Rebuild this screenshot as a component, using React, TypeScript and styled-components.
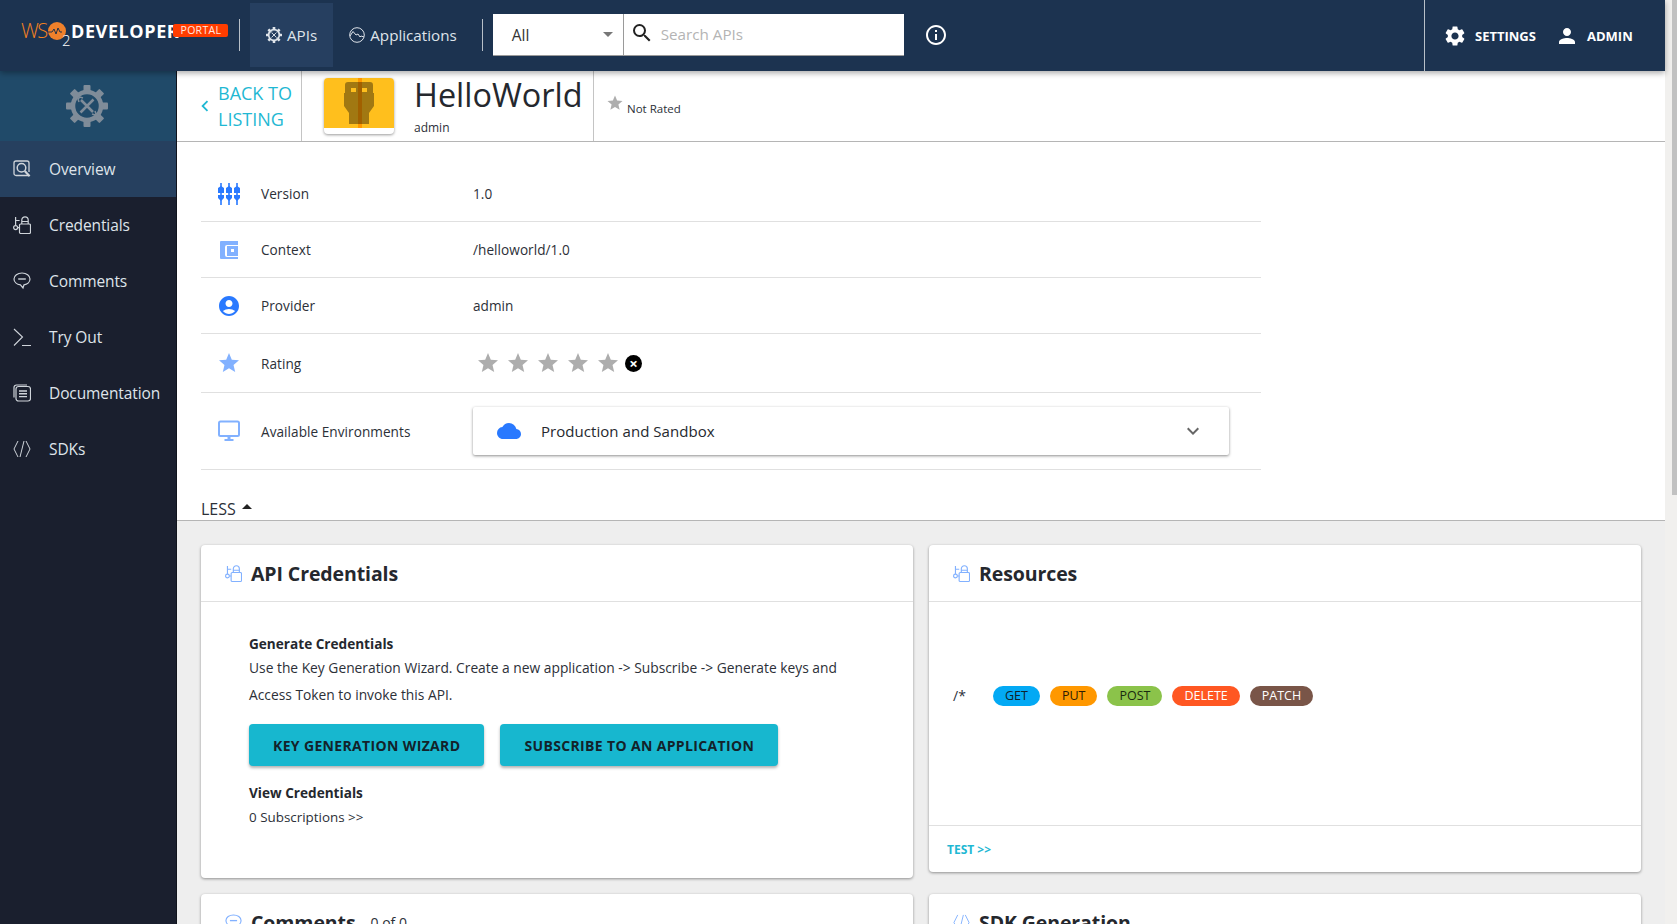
import styled, { createGlobalStyle } from "styled-components";
import {
	MdAccountCircle,
	MdChevronLeft,
	MdCloud,
	MdExpandMore,
	MdInfoOutline,
	MdPerson,
	MdSearch,
	MdSettings,
	MdStar,
} from "react-icons/md";

const GlobalStyle = createGlobalStyle`
	html, body {
		margin: 0;
		height: 100%;
		overflow: hidden;
	}
	body {
		font-family: "Open Sans", "Liberation Sans", sans-serif;
		color: #2c3038;
		background: #eeeeee;
	}
	* {
		box-sizing: border-box;
	}
`;

const Page = styled.div`
	display: flex;
	height: 924px;
	overflow: hidden;
`;

const Main = styled.div`
	flex: 1;
	min-width: 0;
	display: flex;
	flex-direction: column;
`;

const ScrollTrack = styled.div`
	width: 12px;
	flex: none;
	display: flex;
	justify-content: flex-end;
	align-items: flex-start;
	background: #f1f0ee;
`;

const ScrollThumb = styled.div`
	width: 5px;
	height: 495px;
	background: #c1c1c1;
`;

/* top bar */
const Header = styled.header`
	height: 71px;
	flex: none;
	display: flex;
	align-items: center;
	padding-left: 21px;
	background: #1c3350;
	color: #fff;
	box-shadow: 0 2px 6px rgb(0 0 0 / 0.35);
	position: relative;
	z-index: 2;
`;

const Logo = styled.div`
	width: 218px;
	height: 71px;
	display: flex;
	align-items: center;
	flex: none;
	padding-bottom: 10px;
`;

const LogoWs = styled.span`
	font-size: 20px;
	font-weight: 300;
	letter-spacing: -1.6px;
	color: #f58220;
	width: 27px;
`;

const LogoTwo = styled.span`
	font-size: 15px;
	font-weight: 300;
	width: 6px;
	margin-left: -4px;
	margin-top: 18px;
`;

const LogoName = styled.span`
	font-size: 18px;
	font-weight: 700;
	letter-spacing: 0.6px;
	margin-left: 3px;
`;

const LogoBadge = styled.span`
	width: 55px;
	height: 13px;
	margin-left: -6px;
	border-radius: 2px;
	background: #ff3d00;
	color: #ffe9e0;
	font-size: 10.5px;
	line-height: 13px;
	text-align: center;
	letter-spacing: 0.3px;
`;

const HeaderRule = styled.div`
	width: 1px;
	height: 32px;
	flex: none;
	margin-bottom: 2px;
	background: #b8c0c8;
`;

const TopTab = styled.a<{ $active?: boolean }>`
	height: 64px;
	margin-bottom: 2px;
	display: flex;
	align-items: center;
	gap: 5px;
	padding: 0 16px;
	font-size: 15.2px;
	color: #dfe4ea;
	background: ${(p) => (p.$active ? "#263f60" : "transparent")};
`;

const TopTabs = styled.nav`
	display: flex;
	margin: 0 9px 0 10px;
`;

const SearchBox = styled.div`
	display: flex;
	height: 42px;
	width: 411px;
	margin: 0 20px 2px 10px;
	background: #fff;
	border-bottom: 1px solid #9a9a9a;
	color: #333;
`;

const CategorySelect = styled.div`
	width: 131px;
	flex: none;
	display: flex;
	align-items: center;
	justify-content: space-between;
	padding: 1px 10px 0 19px;
	font-size: 15.5px;
	border-right: 1px solid #9a9a9a;

	&::after {
		content: "";
		border-left: 5px solid transparent;
		border-right: 5px solid transparent;
		border-top: 5px solid #777;
	}
`;

const SearchField = styled.div`
	flex: 1;
	display: flex;
	align-items: center;
	gap: 7px;
	padding: 0 0 0 6px;
	font-size: 15.2px;
	color: #b4b4b4;

	svg {
		color: #222;
		margin-bottom: 2px;
	}
`;

const HeaderRight = styled.div`
	margin-left: auto;
	width: 241px;
	height: 71px;
	flex: none;
	display: flex;
	align-items: center;
	padding-left: 18px;
	border-left: 1px solid #b8c0c8;
`;

const HeaderAction = styled.span<{ $gap: number; $width: number }>`
	width: ${(p) => p.$width}px;
	display: flex;
	align-items: center;
	gap: ${(p) => p.$gap}px;
	font-size: 13px;
	font-weight: 700;
`;

const InfoButton = styled.span`
	display: flex;
	margin-bottom: 2px;
`;

/* below the top bar */
const Body = styled.div`
	flex: 1;
	min-height: 0;
	display: flex;
`;

const Sidebar = styled.aside`
	width: 177px;
	flex: none;
	background: #1a1f2e;
	border-right: 1px solid #10131c;
`;

const SidebarHead = styled.div`
	height: 70px;
	display: flex;
	align-items: center;
	justify-content: center;
	padding-right: 2px;
	background: #204a69;
	color: #7f8c99;
`;

const SideItem = styled.a<{ $active?: boolean }>`
	height: 56px;
	display: flex;
	align-items: center;
	gap: 18px;
	padding-left: 13px;
	font-size: 15.5px;
	letter-spacing: -0.1px;
	color: #dfe4ea;
	background: ${(p) => (p.$active ? "#26405f" : "transparent")};

	svg {
		flex: none;
		color: #cfd4da;
	}
`;

const Content = styled.div`
	flex: 1;
	min-width: 0;
	overflow: hidden;
`;

const TitleBar = styled.div`
	height: 71px;
	display: flex;
	background: #fff;
	border-bottom: 1px solid #b5b5b5;
`;

const BackLink = styled.a`
	width: 125px;
	flex: none;
	display: flex;
	align-items: center;
	padding-left: 20px;
	gap: 2px;
	border-right: 1px solid #c4c4c4;
	color: #1fb8d3;
	font-size: 18px;
	line-height: 26px;

	svg {
		margin-left: -3px;
		flex: none;
	}
`;

const ApiIdentity = styled.div`
	width: 292px;
	flex: none;
	display: flex;
	padding: 7px 0 0 22px;
	border-right: 1px solid #c4c4c4;
`;

const Thumb = styled.div`
	width: 70px;
	height: 56px;
	flex: none;
	border-radius: 4px;
	overflow: hidden;
	background: #fff;
	box-shadow: 0 1px 3px rgb(0 0 0 / 0.4);
`;

const ApiText = styled.div`
	margin-left: 20px;
`;

const ApiName = styled.h1`
	margin: -6px 0 0;
	font-size: 32.4px;
	font-weight: 400;
	line-height: 44px;
	color: #25282e;
`;

const ApiOwner = styled.div`
	font-size: 12px;
	line-height: 17px;
	margin-top: 3px;
`;

const RatingSummary = styled.div`
	display: flex;
	align-items: flex-start;
	gap: 3px;
	padding: 23px 0 0 12px;
	font-size: 11.5px;
	line-height: 22px;

	svg {
		color: #adadad;
		flex: none;
	}

	span {
		margin-top: 4px;
	}
`;

const Details = styled.section`
	height: 379px;
	padding: 24px 0 0 24px;
	background: #fff;
	border-bottom: 1px solid #b5b5b5;
`;

const DetailTable = styled.div`
	width: 1060px;
`;

const DetailRow = styled.div<{ $height: number }>`
	height: ${(p) => p.$height}px;
	display: grid;
	grid-template-columns: 60px 212px 1fr;
	align-items: center;
	border-bottom: 1px solid #e0e0e0;
	font-size: 13.6px;
	letter-spacing: 0.05px;
`;

const DetailIcon = styled.div<{ $color: string }>`
	width: 56px;
	display: flex;
	justify-content: center;
	color: ${(p) => p.$color};
`;

const Stars = styled.div`
	display: flex;
	align-items: center;
	padding-left: 3px;
	color: #adadad;

	svg {
		margin-right: 6px;
	}
`;

const ClearRating = styled.span`
	width: 17px;
	height: 17px;
	margin-left: -1px;
	border-radius: 50%;
	background: #000;
	color: #fff;
	font-size: 15px;
	font-weight: 700;
	line-height: 16px;
	text-align: center;
`;

const Expansion = styled.div`
	width: 756px;
	height: 48px;
	display: flex;
	align-items: center;
	padding: 0 24px 0 24px;
	border-radius: 2px;
	background: #fff;
	box-shadow: 0 1px 3px rgb(0 0 0 / 0.45);
	font-size: 15px;
	color: #25282e;

	svg:first-child {
		color: #2979ff;
	}

	svg:last-child {
		margin-left: auto;
		color: #666;
	}
`;

const ExpansionLabel = styled.span`
	margin-left: 20px;
`;

const LessToggle = styled.div`
	margin-top: 28px;
	display: flex;
	align-items: center;
	gap: 6px;
	font-size: 16px;
	line-height: 22px;

	&::after {
		content: "";
		margin-bottom: 6px;
		border-left: 5px solid transparent;
		border-right: 5px solid transparent;
		border-bottom: 5px solid #222;
	}
`;

/* cards */
const CardGrid = styled.div`
	display: grid;
	grid-template-columns: 712px 712px;
	gap: 16px;
	align-items: start;
	padding: 24px 24px 24px 24px;
`;

const Card = styled.article`
	border-radius: 4px;
	background: #fff;
	box-shadow: 0 1px 3px rgb(0 0 0 / 0.4);
`;

const CardHead = styled.div`
	height: 57px;
	display: flex;
	align-items: center;
	gap: 9px;
	padding: 0 0 0 24px;
	border-bottom: 1px solid #e0e0e0;

	svg {
		color: #82b1ff;
		flex: none;
	}
`;

const CardTitle = styled.h2`
	margin: 0;
	font-size: 19.5px;
	font-weight: 700;
	letter-spacing: -0.1px;
	color: #25282e;
`;

const CardCount = styled.span`
	font-size: 14px;
	margin-left: 6px;
`;

const CredentialsBody = styled.div`
	padding: 32px 48px 49px;
	font-size: 13.8px;
`;

const BlockTitle = styled.h3`
	margin: 0;
	font-size: 13.6px;
	font-weight: 700;
	line-height: 20px;
	color: #25282e;
`;

const Paragraph = styled.p`
	margin: 0;
	line-height: 27px;
`;

const ButtonRow = styled.div`
	display: flex;
	gap: 16px;
	margin: 16px 0 17px;
`;

const ActionButton = styled.button`
	height: 42px;
	padding: 0 24px;
	border: 0;
	border-radius: 4px;
	background: #17b7cf;
	box-shadow: 0 2px 3px rgb(0 0 0 / 0.3);
	color: #13222a;
	font-family: inherit;
	font-size: 14px;
	font-weight: 700;
	letter-spacing: 0.35px;
`;

const SubscriptionLink = styled.div`
	font-size: 13.4px;
	line-height: 24px;
	margin-top: 2px;
`;

const ResourcesBody = styled.div`
	height: 223px;
	display: flex;
	gap: 10px;
	align-items: flex-start;
	padding: 84px 0 0 24px;
	font-size: 14px;
`;

const ResourcePath = styled.span`
	width: 30px;
	line-height: 20px;
`;

const MethodChip = styled.span<{ $bg: string; $fg: string }>`
	height: 20px;
	padding: 0 12px;
	border-radius: 10px;
	background: ${(p) => p.$bg};
	color: ${(p) => p.$fg};
	font-size: 12.5px;
	line-height: 20px;
`;

const CardFooter = styled.div`
	height: 47px;
	display: flex;
	align-items: center;
	padding: 0 0 0 18px;
	border-top: 1px solid #e0e0e0;
	color: #1fb8d3;
	font-size: 12px;
	font-weight: 700;
`;

type IconProps = { size?: number };

const OverviewIcon = ({ size = 18 }: IconProps) => (
	<svg width={size} height={size} viewBox="0 0 18 18" fill="none" stroke="currentColor">
		<path d="M15 15.5H3a2 2 0 0 1-2-2V3a2 2 0 0 1 2-2h11a2 2 0 0 1 2 2v9" strokeWidth="1.3" />
		<circle cx="8.5" cy="7.8" r="4.3" strokeWidth="1.5" />
		<path d="M11.8 11l4.8 5.2" strokeWidth="2.2" />
	</svg>
);

const CredentialsIcon = ({ size = 18 }: IconProps) => (
	<svg width={size} height={size} viewBox="0 0 18 18" fill="none" stroke="currentColor" strokeWidth="1.2">
		<rect x="6.5" y="8" width="11" height="9.5" rx="1.2" />
		<path d="M8.8 8V4a3.2 3.2 0 0 1 6.4 0v4M8.8 5.5h6.4" />
		<circle cx="2.6" cy="11.6" r="2" />
		<path d="M2.6 9.5V1M2.6 4.5h4M4.6 11.6h2" />
	</svg>
);

const CommentsIcon = ({ size = 18 }: IconProps) => (
	<svg width={size} height={size} viewBox="0 0 18 18" fill="none" stroke="currentColor" strokeWidth="1.2">
		<path d="M9 1C13.4 1 17 3.5 17 7c0 3.2-3 5.4-6 5.8L10 16l-2.6-3.2C3.8 12.4 1 10 1 7c0-3.500 3.600-6 8-6z" />
		<path d="M5.200 7h7.600" strokeWidth="1.4" />
	</svg>
);

const TryOutIcon = ({ size = 18 }: IconProps) => (
	<svg width={size} height={size} viewBox="0 0 18 18" fill="none" stroke="currentColor" strokeWidth="1.1">
		<path d="M1 1l8.500 8L1 17.500M9 17.500h9" />
	</svg>
);

const DocsIcon = ({ size = 18 }: IconProps) => (
	<svg width={size} height={size} viewBox="0 0 18 18" fill="none" stroke="currentColor" strokeWidth="1.2">
		<rect x="3" y="2.500" width="14.500" height="14.500" rx="2.500" />
		<path d="M1 13.500V3.500A2.500 2.500 0 0 1 3.500 1H14" />
		<path d="M6 7h8M6 9.800h8M6 12.600h8" strokeWidth="1.400" />
	</svg>
);

const SdkIcon = ({ size = 18 }: IconProps) => (
	<svg width={size} height={size} viewBox="0 0 18 18" fill="none" stroke="currentColor" strokeWidth="1">
		<path d="M5 1L1 9l4 8M13 1l4 8-4 8M7 17l4-16" />
	</svg>
);

const GearTools = ({ size = 42 }: IconProps) => (
	<svg width={size} height={size} viewBox="0 0 42 42" fill="none" stroke="currentColor">
		{[0, 45, 90, 135, 180, 225, 270, 315].map((deg) => (
			<rect key={deg} x="17.500" y="0" width="7" height="7" rx="1" fill="currentColor" stroke="none" transform={`rotate(${deg} 21 21)`} />
		))}
		<circle cx="21" cy="21" r="14" strokeWidth="4.500" />
		<path d="M15 15l12 12M27.500 14.500L14.500 27.500" strokeWidth="2.500" />
		<path d="M13 17l-1-3 2-2 3 1M26 29l3 1 1-1-1-3" strokeWidth="1.500" />
	</svg>
);

const ApplicationsIcon = ({ size = 16 }: IconProps) => (
	<svg width={size} height={size} viewBox="0 0 16 16" fill="none" stroke="currentColor" strokeWidth="1">
		<circle cx="8" cy="8" r="7.300" />
		<path d="M1 9l3-4.500 3 3.500 2-1 2 3 1-1 3 1" />
	</svg>
);

const PulseO = () => (
	<svg width="18" height="18" viewBox="0 0 18 18">
		<circle cx="9" cy="9" r="9" fill="#f0812b" />
		<path d="M0 10h4l2-3 2 5 2-6 2 4h2" fill="none" stroke="#23324a" strokeWidth="1" />
	</svg>
);

const PlugThumb = () => (
	<svg width="70" height="50" viewBox="0 0 70 50">
		<rect width="70" height="50" fill="#ffbf1d" />
		<rect x="34" width="4" height="50" fill="#ff9800" />
		<path
			fillRule="evenodd"
			fill="#000"
			opacity="0.37"
			d="M24 4h22a3 3 0 0 1 3 3v8h1v13l-5 7v11H25V35l-5-7V15h1V7a3 3 0 0 1 3-3zM27 10v4h5v-4zM38 10v4h5v-4z"
		/>
	</svg>
);

const VersionIcon = () => (
	<svg width="22" height="22" viewBox="0 0 22 22" fill="currentColor">
		{[3, 11, 19].map((x) => (
			<g key={x}>
				<rect x={x - 0.8} y="0" width="1.600" height="22" />
				<path d={`M${x - 3} 5l3-2 3 2v5h-6zM${x - 3} 12h6v3l-3 3-3-3z`} />
			</g>
		))}
	</svg>
);

const ContextIcon = () => (
	<svg width="20" height="20" viewBox="0 0 20 20">
		<path d="M2 1h17v4H8a2 2 0 0 0-2 2v8a2 2 0 0 0 2 2h11v2H2a1 1 0 0 1-1-1V2a1 1 0 0 1 1-1z" fill="#82b1ff" />
		<path fillRule="evenodd" d="M8 6h11v10H8zM12 9v3h3V9z" fill="#82b1ff" />
	</svg>
);

const MonitorIcon = () => (
	<svg width="24" height="24" viewBox="0 0 24 24" fill="none">
		<rect x="2" y="2.500" width="20" height="14.500" rx="1.500" stroke="#82b1ff" strokeWidth="2" />
		<path d="M10.500 17.500h3V20h3v2h-9v-2h3z" fill="#82b1ff" />
	</svg>
);

const sideLinks = [
	{ label: "Overview", Icon: OverviewIcon, active: true },
	{ label: "Credentials", Icon: CredentialsIcon },
	{ label: "Comments", Icon: CommentsIcon },
	{ label: "Try Out", Icon: TryOutIcon },
	{ label: "Documentation", Icon: DocsIcon },
	{ label: "SDKs", Icon: SdkIcon },
];

const methods = [
	{ name: "GET", bg: "#03a9f4", fg: "#10222c" },
	{ name: "PUT", bg: "#ff9800", fg: "#2c1c05" },
	{ name: "POST", bg: "#8bc34a", fg: "#1a2a10" },
	{ name: "DELETE", bg: "#ff5722", fg: "#fff" },
	{ name: "PATCH", bg: "#795548", fg: "#fff" },
];

export default function App() {
	return (
		<Page>
			<GlobalStyle />
			<Main>
				<Header>
					<Logo>
						<LogoWs>WS</LogoWs>
						<PulseO />
						<LogoTwo>2</LogoTwo>
						<LogoName>DEVELOPER</LogoName>
						<LogoBadge>PORTAL</LogoBadge>
					</Logo>
					<HeaderRule />
					<TopTabs>
						<TopTab $active>
							<GearTools size={16} />
							APIs
						</TopTab>
						<TopTab>
							<ApplicationsIcon />
							Applications
						</TopTab>
					</TopTabs>
					<HeaderRule />
					<SearchBox>
						<CategorySelect>All</CategorySelect>
						<SearchField>
							<MdSearch size={24} />
							Search APIs
						</SearchField>
					</SearchBox>
					<InfoButton>
						<MdInfoOutline size={24} />
					</InfoButton>
					<HeaderRight>
						<HeaderAction $gap={8} $width={112}>
							<MdSettings size={24} />
							SETTINGS
						</HeaderAction>
						<HeaderAction $gap={8} $width={90}>
							<MdPerson size={24} />
							ADMIN
						</HeaderAction>
					</HeaderRight>
				</Header>
				<Body>
					<Sidebar>
						<SidebarHead>
							<GearTools />
						</SidebarHead>
						{sideLinks.map(({ label, Icon, active }) => (
							<SideItem key={label} $active={active}>
								<Icon />
								{label}
							</SideItem>
						))}
					</Sidebar>
					<Content>
						<TitleBar>
							<BackLink>
								<MdChevronLeft size={22} />
								<span>
									BACK TO
									<br />
									LISTING
								</span>
							</BackLink>
							<ApiIdentity>
								<Thumb>
									<PlugThumb />
								</Thumb>
								<ApiText>
									<ApiName>HelloWorld</ApiName>
									<ApiOwner>admin</ApiOwner>
								</ApiText>
							</ApiIdentity>
							<RatingSummary>
								<MdStar size={18} />
								<span>Not Rated</span>
							</RatingSummary>
						</TitleBar>
						<Details>
							<DetailTable>
								<DetailRow $height={56}>
									<DetailIcon $color="#2979ff">
										<VersionIcon />
									</DetailIcon>
									<span>Version</span>
									<span>1.0</span>
								</DetailRow>
								<DetailRow $height={56}>
									<DetailIcon $color="#82b1ff">
										<ContextIcon />
									</DetailIcon>
									<span>Context</span>
									<span>/helloworld/1.0</span>
								</DetailRow>
								<DetailRow $height={56}>
									<DetailIcon $color="#2979ff">
										<MdAccountCircle size={24} />
									</DetailIcon>
									<span>Provider</span>
									<span>admin</span>
								</DetailRow>
								<DetailRow $height={59}>
									<DetailIcon $color="#82b1ff">
										<MdStar size={24} />
									</DetailIcon>
									<span>Rating</span>
									<Stars>
										{[1, 2, 3, 4, 5].map((n) => (
											<MdStar key={n} size={24} />
										))}
										<ClearRating>×</ClearRating>
									</Stars>
								</DetailRow>
								<DetailRow $height={77}>
									<DetailIcon $color="#82b1ff">
										<MonitorIcon />
									</DetailIcon>
									<span>Available Environments</span>
									<Expansion>
										<MdCloud size={24} />
										<ExpansionLabel>Production and Sandbox</ExpansionLabel>
										<MdExpandMore size={24} />
									</Expansion>
								</DetailRow>
							</DetailTable>
							<LessToggle>LESS</LessToggle>
						</Details>
						<CardGrid>
							<Card>
								<CardHead>
									<CredentialsIcon size={17} />
									<CardTitle>API Credentials</CardTitle>
								</CardHead>
								<CredentialsBody>
									<BlockTitle>Generate Credentials</BlockTitle>
									<Paragraph>
										Use the Key Generation Wizard. Create a new application -&gt; Subscribe -&gt; Generate keys and
										<br />
										Access Token to invoke this API.
									</Paragraph>
									<ButtonRow>
										<ActionButton>KEY GENERATION WIZARD</ActionButton>
										<ActionButton>SUBSCRIBE TO AN APPLICATION</ActionButton>
									</ButtonRow>
									<BlockTitle>View Credentials</BlockTitle>
									<SubscriptionLink>0 Subscriptions &gt;&gt;</SubscriptionLink>
								</CredentialsBody>
							</Card>
							<Card>
								<CardHead>
									<CredentialsIcon size={17} />
									<CardTitle>Resources</CardTitle>
								</CardHead>
								<ResourcesBody>
									<ResourcePath>/*</ResourcePath>
									{methods.map((m) => (
										<MethodChip key={m.name} $bg={m.bg} $fg={m.fg}>
											{m.name}
										</MethodChip>
									))}
								</ResourcesBody>
								<CardFooter>TEST &gt;&gt;</CardFooter>
							</Card>
							<Card>
								<CardHead>
									<CommentsIcon size={17} />
									<CardTitle>Comments</CardTitle>
									<CardCount>0 of 0</CardCount>
								</CardHead>
							</Card>
							<Card>
								<CardHead>
									<SdkIcon size={17} />
									<CardTitle>SDK Generation</CardTitle>
								</CardHead>
							</Card>
						</CardGrid>
					</Content>
				</Body>
			</Main>
			<ScrollTrack>
				<ScrollThumb />
			</ScrollTrack>
		</Page>
	);
}
